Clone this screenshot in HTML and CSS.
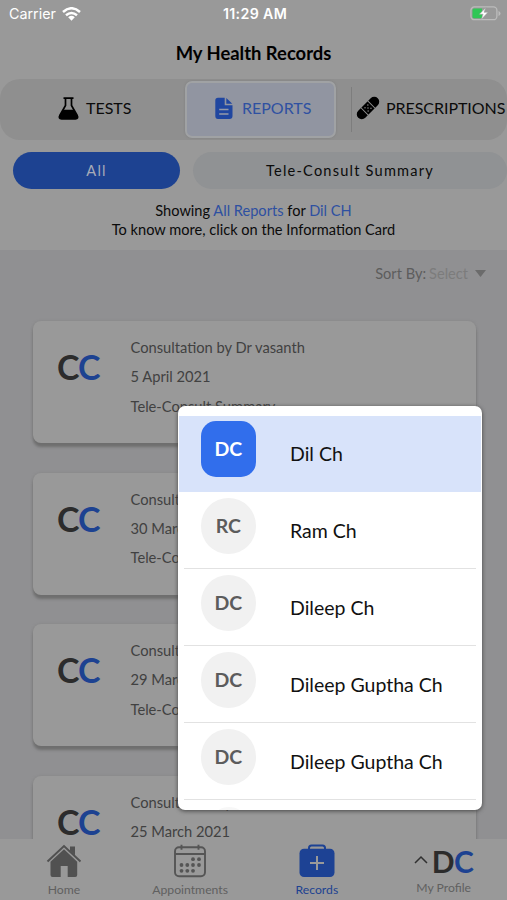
FILE: index.html
```html
<!DOCTYPE html>
<html lang="en">
<head>
<meta charset="utf-8">
<title>My Health Records</title>
<link rel="stylesheet" href="styles.css">
</head>
<body>
<div class="app">
  <header class="status">
    <div class="carrier"><span>Carrier</span>
      <svg width="19" height="14" viewBox="0 0 19 14" fill="none" stroke="#fff" stroke-width="2.5"><path d="M1 5Q9.500-2.500 18 5M4 8.300Q9.500 3.700 15 8.300"/><path d="M6.200 10.200Q9.500 7.500 12.800 10.200L9.500 13.700Z" fill="#fff" stroke="none"/></svg>
    </div>
    <span class="clock">11:29 AM</span>
    <svg class="battery" width="31" height="15" viewBox="0 0 31 15"><rect x=".9" y=".9" width="26" height="12.800" rx="3.500" fill="none" stroke="#bcbcbc" stroke-width="1.300"/><path d="M28.500 5v5q2-.7 2-2.500t-2-2.500" fill="#bcbcbc"/><path d="M4 2.500h8v9.700H4q-1.500 0-1.500-1.500V4Q2.500 2.500 4 2.500" fill="#30c756"/><path d="M15.800 1.700 9.300 8.200h3.800l-1.900 5.200 6.800-7.100h-4z" fill="#fff" stroke="#999" stroke-width=".5"/></svg>
  </header>
  <h1>My Health Records</h1>
  <nav class="tabs">
    <div class="tab tests">
      <svg width="21" height="23" viewBox="0 0 21 23"><path d="M5.500 1.200h10M7.500 1.500v7L1.800 18.500q-1.500 3.300 1.700 3.300h14q3.200 0 1.700-3.300L13.500 8.500v-7" fill="none" stroke="#000" stroke-width="1.700"/><path d="M5.400 12.800h10.200l4.200 6.500q.5 2.700-2.300 2.700h-14q-2.800 0-2.300-2.700z"/></svg>
      <span>TESTS</span>
    </div>
    <div class="tab reports">
      <svg width="18" height="23" viewBox="0 0 18 23"><path d="M3 .8h6.700v7.500h7.800V19q0 3-3 3H3q-2.700 0-2.700-3V3.500Q.3.800 3 .8" fill="#2046a0"/><path d="M11.300 1v5.700h6z" fill="#2046a0"/><path d="M4.200 12.500h9.300M4.200 17h9.300" stroke="#959aa8" stroke-width="1.500"/></svg>
      <span>REPORTS</span>
    </div>
    <div class="tab prescriptions">
      <svg width="24" height="24" viewBox="0 0 24 24"><g transform="rotate(-45 12 12)"><rect x="-1.800" y="7" width="27.600" height="10" rx="5"/><path d="M7.200 6.500v11M16.800 6.500v11" stroke="#8f8f8f" stroke-width="1"/><g fill="#8f8f8f"><circle cx="10" cy="9.800" r=".7"/><circle cx="14" cy="9.800" r=".7"/><circle cx="10" cy="14.200" r=".7"/><circle cx="14" cy="14.200" r=".7"/><circle cx="12" cy="12" r=".7"/></g></g></svg>
      <span>PRESCRIPTIONS</span>
    </div>
  </nav>
  <div class="filters"><div class="pill all">All</div><div class="pill tele">Tele-Consult Summary</div></div>
  <div class="summary">Showing <b>All Reports</b> for <b>Dil CH</b><br>To know more, click on the Information Card</div>
  <main class="list">
    <div class="sort"><span>Sort By:</span><span class="select">Select</span><i></i></div>
    <article class="card"><div class="mono">C<em>C</em></div><div class="info"><p>Consultation by Dr vasanth</p><p>5 April 2021</p><p>Tele-Consult Summary</p></div></article>
    <article class="card"><div class="mono">C<em>C</em></div><div class="info"><p>Consultation by Dr vasanth</p><p>30 March 2021</p><p>Tele-Consult Summary</p></div></article>
    <article class="card"><div class="mono">C<em>C</em></div><div class="info"><p>Consultation by Dr vasanth</p><p>29 March 2021</p><p>Tele-Consult Summary</p></div></article>
    <article class="card"><div class="mono">C<em>C</em></div><div class="info"><p>Consultation by Dr vasanth</p><p>25 March 2021</p></div></article>
  </main>
  <footer class="bottom">
    <div class="item">
      <svg width="36" height="34" viewBox="0 0 36 34"><path d="M1.500 17.500 18 2l16.500 15.500" fill="none" stroke="#515151" stroke-width="2"/><path d="M24 2.500h5v9l-5-4.700zM18 5.300l13.200 12.400V31q0 2-2 2h-7.500V22h-7v11H6.500q-2 0-2-2V17.700z" fill="#515151"/></svg>
      <span>Home</span>
    </div>
    <div class="item">
      <svg width="34" height="34" viewBox="0 0 34 34" fill="none" stroke="#555" stroke-width="1.900"><rect x="2" y="3.200" width="30" height="29" rx="4"/><path d="M2 10h30M8.500.8v5M25.500.8v5"/><g fill="#555" stroke="none"><circle cx="20" cy="15.200" r="1.900"/><circle cx="26" cy="15.200" r="1.900"/><circle cx="8.500" cy="21" r="1.900"/><circle cx="14.300" cy="21" r="1.900"/><circle cx="20" cy="21" r="1.900"/><circle cx="26" cy="21" r="1.900"/><circle cx="8.500" cy="26.800" r="1.900"/><circle cx="14.300" cy="26.800" r="1.900"/><circle cx="20" cy="26.800" r="1.900"/></g></svg>
      <span>Appointments</span>
    </div>
    <div class="item active">
      <svg width="36" height="34" viewBox="0 0 36 34"><path d="M10 6V4q0-2.500 2.500-2.500h11Q26 1.500 26 4v2" fill="none" stroke="#1d4294" stroke-width="2"/><rect x=".5" y="4.800" width="35" height="28.200" rx="4.500" fill="#1d4294"/><path d="M18 12v14M11 19h14" stroke="#999" stroke-width="2"/></svg>
      <span>Records</span>
    </div>
    <div class="item profile">
      <div class="badge"><svg width="14" height="9" viewBox="0 0 14 9" fill="none" stroke="#303030" stroke-width="1.500"><path d="m1 8 6-6 6 6"/></svg><strong>D<em>C</em></strong></div>
      <span>My Profile</span>
    </div>
  </footer>
  <div class="menu">
    <div class="row selected"><div class="avatar">DC</div><span>Dil Ch</span></div>
    <div class="row"><div class="avatar">RC</div><span>Ram Ch</span></div>
    <div class="row"><div class="avatar">DC</div><span>Dileep Ch</span></div>
    <div class="row"><div class="avatar">DC</div><span>Dileep Guptha Ch</span></div>
    <div class="row"><div class="avatar">DC</div><span>Dileep Guptha Ch</span></div>
    <div class="row next"><div class="avatar"></div></div>
  </div>
</div>
</body>
</html>
```
FILE: styles.css
```css
* { box-sizing: border-box; }
body { margin: 0; font-family: Lato, sans-serif; color: #0b0b0b; }
em, i { font-style: normal; }
svg { display: block; flex: none; }
.app { position: relative; width: 507px; height: 900px; overflow: hidden; background: #999; display: flex; flex-direction: column; }
.status { height: 27px; flex: none; display: grid; grid-template-columns: 1fr auto 1fr; align-items: center; padding: 0 6px 0 9px; color: #fff; font: 14.3px/27px Inter, sans-serif; }
.carrier { display: flex; align-items: center; gap: 6px; }
.clock { font-weight: 600; font-size: 14.2px; letter-spacing: .35px; }
.battery { justify-self: end; }
h1 { margin: 0; height: 52px; flex: none; font-size: 18.400px; line-height: 52px; font-weight: 700; text-align: center; color: #000; }
.tabs { height: 61px; flex: none; display: grid; grid-template-columns: 184px 152px 1fr; background: #8f8f8f; border-radius: 20px; }
.tab { display: flex; align-items: center; font-size: 16px; white-space: nowrap; padding-bottom: 3px; }
.tab span { margin-bottom: 2px; }
.tests { padding-left: 58px; gap: 7px; }
.reports { margin: 2px 0 2px 1px; padding: 0 0 3px 28px; gap: 9px; border: 2px solid #a0a2a4; border-radius: 7px; background: #9195a1; box-shadow: 0 0 2px #7c7c7c; color: #2f51a1; }
.prescriptions { margin: 8px 0 8px 15px; padding: 0 0 3px 4px; gap: 6px; border-left: 1px solid #7d7d7d; letter-spacing: -.05px; }
.filters { height: 62px; flex: none; display: flex; gap: 13px; padding: 12px 0 13px 13px; }
.pill { height: 37px; border-radius: 19px; text-align: center; line-height: 37px; font-size: 14.6px; letter-spacing: 1.2px; }
.all { width: 167px; background: #1d4291; color: #a6abb8; }
.tele { flex: 1; background: #909294; }
.summary { height: 48px; flex: none; font-size: 14.600px; line-height: 18.500px; text-align: center; }
.summary b { font-weight: 400; color: #2e50a1; }
.list { flex: 1; min-height: 0; overflow: hidden; background: #909092; padding: 14px 31px 0 33px; }
.sort { height: 57px; display: flex; justify-content: flex-end; font-size: 14.6px; line-height: 20px; color: #5d5d5d; margin-right: -10px; }
.select { color: #7c7c7c; margin-left: 3px; }
.sort i { margin: 6px 0 0 7px; width: 11px; height: 7px; background: #6b6b6b; clip-path: polygon(0 0, 100% 0, 50% 100%); }
.card { height: 122px; margin-bottom: 29.600px; border-radius: 8px; background: #999; box-shadow: 0 4px 3px #6e6e6e, 0 0 3px #858585; display: flex; }
.mono { width: 97.500px; padding: 24px 0 0 24px; font-size: 34px; line-height: 44px; font-weight: 700; color: #2c2c2c; white-space: nowrap; letter-spacing: -1px; }
.mono em { color: #1d4291; }
.info { padding-top: 12px; }
.info p { margin: 0; height: 29.300px; font-size: 14.700px; line-height: 29px; color: #414141; white-space: nowrap; }
.bottom { height: 61px; flex: none; display: grid; grid-template-columns: repeat(4, 1fr); background: #999; }
.item { display: flex; flex-direction: column; align-items: center; padding-top: 5px; font-size: 12.200px; line-height: 15px; color: #606060; gap: 4px; }
.item:first-child { padding-left: 1px; }
.active { color: #1d4291; }
.badge { display: flex; height: 34px; align-items: center; gap: 4px; }
.badge svg { margin-bottom: 4px; }
.badge strong { font-size: 30px; line-height: 34px; color: #2c2c2c; letter-spacing: -.5px; }
.badge em { color: #1d4291; }
.profile { gap: 2px; }
.menu { position: absolute; left: 178px; top: 406px; width: 304px; height: 404px; padding: 10px 1px 0; overflow: hidden; border-radius: 7px; background: #fff; box-shadow: 0 1px 4px #444; }
.row { position: relative; height: 77px; display: flex; padding: 6px 0 0 21.5px; font-size: 19.500px; color: #111; }
.row span { margin-left: 34px; line-height: 66px; }
.row:not(.selected)::after { content: ""; position: absolute; left: 5px; right: 5px; bottom: 0; height: 1px; background: #e2e2e2; }
.selected { height: 76px; padding-top: 5px; background: #d8e3fa; }
.avatar { width: 55.5px; height: 55.5px; border-radius: 50%; background: #f1f1f1; font-size: 19.5px; line-height: 55px; font-weight: 700; text-align: center; color: #5c5c5c; }
.selected .avatar { border-radius: 15px; background: #316eec; color: #fff; }
.next .avatar { width: 30px; height: 20px; margin: 1px 0 0 13px; background: #f7f7f7; }
```
